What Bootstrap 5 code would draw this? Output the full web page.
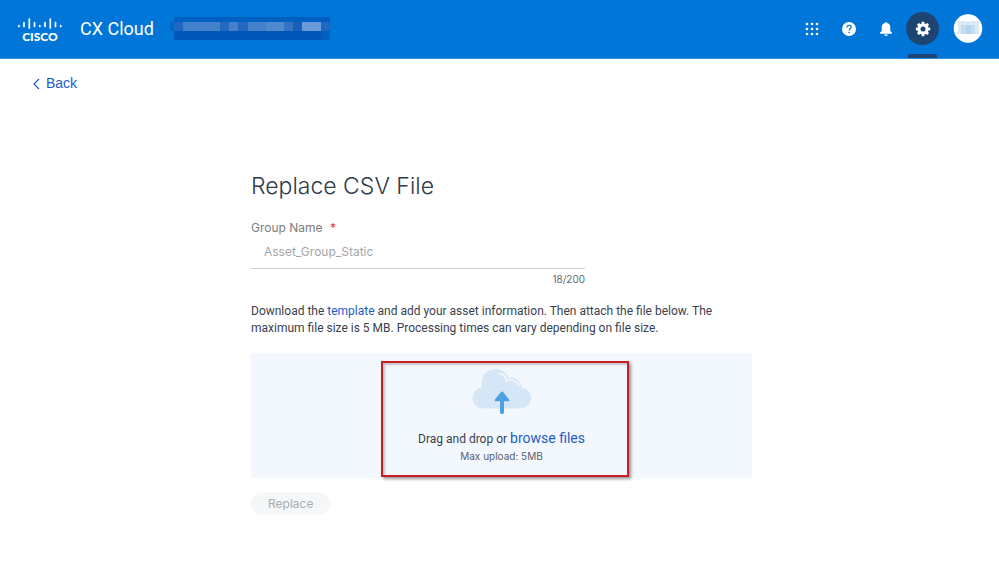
<!DOCTYPE html>
<html lang="en">
<head>
<meta charset="utf-8">
<meta name="viewport" content="width=device-width, initial-scale=1">
<title>CX Cloud</title>
<link href="https://cdn.jsdelivr.net/npm/bootstrap@5.3.0/dist/css/bootstrap.min.css" rel="stylesheet">
<style>
body{font-family:Inter,"Liberation Sans",sans-serif;font-size:12px;line-height:17px;color:#39424f;background:#fff}
a{color:#1d5cc6;text-decoration:none}
.topbar{background:#0076d8;height:59px;border-bottom:1px solid #2f8fe0;padding:0 16px 1px 16px}
.brand-name{font-family:Roboto,sans-serif;font-size:18px;line-height:24px;color:#fff}
.icon-btn{width:33px;height:33px;border-radius:50%;color:#fff}
.icon-btn.current{background:#1e4471;position:relative}
.icon-btn.current::after{content:"";position:absolute;left:2px;right:2px;bottom:-13px;height:4px;background:#1e4471;border-radius:2px 2px 0 0}
.back-link{font-family:"Liberation Sans",sans-serif;font-size:14px;line-height:17px}
.panel{max-width:505px;padding-left:4px}
.page-title{font-size:23px;line-height:33px;font-weight:300;color:#2f3a4a}
.name-field{max-width:334px}
.body-copy{font-family:Roboto,"Liberation Sans",sans-serif}
.intro{padding-top:2px}
.name-label{color:#7b7d80}
.name-input{font-size:12px;line-height:17px;height:33px;padding:0 13px;border:0;border-bottom:1px solid #d0d2d4;border-radius:0}
.name-input:disabled{background:transparent;color:#a4a6a9;opacity:1}
.counter{font-size:10px;line-height:12px;color:#63676d}
.dropzone{background:#f3f8fe;height:125px;padding-top:15px}
.browse{font-size:14px}
.limit{font-size:10px;line-height:16px;color:#5a616b}
.callout-frame{position:absolute;left:130px;top:8px;width:248px;height:116px;border:2px solid #cb1d22;box-shadow:2px 2px 3px #0006,inset 2px 2px 2px #0003;pointer-events:none}
.btn-replace{font-size:12px;line-height:17px;margin-top:14px;padding:3px 17px;border:0}
.btn-replace:disabled{background:#f6f7f9;color:#a9abae;opacity:1}
</style>
</head>
<body>
<header class="topbar d-flex align-items-center">
  <a href="#" class="d-flex align-items-center" aria-label="Cisco home">
    <svg width="48" height="28" viewBox="0 0 48 28">
      <g stroke="#fff" stroke-width="1.700" stroke-linecap="round">
        <path d="M3 10.500v1M8 7.500v4M13.300 4v9M18.500 7.500v4M23.800 10.500v1M29 7.500v4M34.300 4v9M39.500 7.500v4M44.700 10.500v1"/>
      </g>
      <text x="24" y="26" text-anchor="middle" fill="#fff" font-family="Lato,sans-serif" font-weight="900" font-size="12">CISCO</text>
    </svg>
  </a>
  <span class="brand-name ms-3">CX Cloud</span>
  <svg class="ms-3" width="160" height="24" viewBox="1 0 160 24" shape-rendering="crispEdges" aria-hidden="true">
    <path fill="#006acb" d="M0 5h5v9H0z"/>
    <path fill="#0060c2" d="M5 0h156v23H5z"/>
    <path fill="#0057b7" d="M5 14h147v9H5z"/>
    <path fill="#2069c2" d="M5 5h9v9H5zM152 5h9v9h-9z"/>
    <path fill="#4581cb" d="M14 5h37v9H14zM60 5h9v9h-9zM79 5h18v9H79z"/>
    <path fill="#2469c1" d="M51 5h9v9h-9zM69 5h10v9H69z"/>
    <path fill="#5089ce" d="M97 5h18v9H97z"/>
    <path fill="#3474c5" d="M115 5h9v9h-9z"/>
    <path fill="#1960bd" d="M124 5h9v9h-9z"/>
    <path fill="#689bd7" d="M133 5h19v9h-19z"/>
  </svg>
  <nav class="ms-auto d-flex align-items-center gap-1" aria-label="Tools">
    <button class="btn icon-btn p-0 border-0 d-flex align-items-center justify-content-center" aria-label="Apps">
      <svg width="14" height="14" fill="#fff"><circle cx="2" cy="2" r="1.300"/><circle cx="7" cy="2" r="1.300"/><circle cx="12" cy="2" r="1.300"/><circle cx="2" cy="7" r="1.300"/><circle cx="7" cy="7" r="1.300"/><circle cx="12" cy="7" r="1.300"/><circle cx="2" cy="12" r="1.300"/><circle cx="7" cy="12" r="1.300"/><circle cx="12" cy="12" r="1.300"/></svg>
    </button>
    <button class="btn icon-btn p-0 border-0 d-flex align-items-center justify-content-center" aria-label="Help">
      <svg width="14" height="14"><circle cx="7" cy="7" r="7" fill="#fff"/><path d="M5 5.500C5 2.600 9.200 2.700 9.200 5.200 9.200 6.700 7.100 6.800 7.100 8.500" fill="none" stroke="#0070cf" stroke-width="1.100"/><circle cx="7.100" cy="10.500" r=".8" fill="#0070cf"/></svg>
    </button>
    <button class="btn icon-btn p-0 border-0 d-flex align-items-center justify-content-center" aria-label="Notifications">
      <svg width="14" height="14" fill="#fff"><path d="M7 0a1 1 0 0 1 1 1C10.200 1.500 11.300 3 11.300 5.500V9l1.700 1.800v.9H1v-.9L2.700 9V5.500C2.700 3 3.800 1.500 6 1a1 1 0 0 1 1-1zM5.200 12.400h3.600a1.800 1.600 0 0 1-3.600 0z"/></svg>
    </button>
    <button class="btn icon-btn current p-0 border-0 d-flex align-items-center justify-content-center" aria-label="Settings">
      <svg width="16" height="16" viewBox="-8 -8 16 16"><g fill="#fff"><circle r="5.400"/><path id="tooth" d="M-1.700-5 -1.200-7.200H1.200L1.700-5V5L1.200 7.200H-1.200L-1.700 5z"/><use href="#tooth" transform="rotate(45)"/><use href="#tooth" transform="rotate(90)"/><use href="#tooth" transform="rotate(135)"/></g><circle r="2.500" fill="#1e4471"/></svg>
    </button>
    <button class="btn p-0 border-0 d-flex ms-2" aria-label="Account">
      <svg width="32" height="29"><circle cx="17" cy="14.500" r="14.300" fill="#fff"/><path fill="#dceaf5" d="M7 7h21v13H7z"/><path fill="#c4dcf0" d="M10 11h14v9H10z"/><path fill="#b4d3ed" d="M15 11h5v9h-5z"/></svg>
    </button>
  </nav>
</header>

<main class="container-fluid px-0">
  <a href="#" class="back-link d-inline-flex align-items-center mt-3 ms-4 px-2">
    <svg class="me-1" width="10" height="12"><path d="M7 1 2 6l5 5" fill="none" stroke="#1d5cc6" stroke-width="1.200"/></svg>Back
  </a>
  <form class="panel mx-auto mt-5 pt-4">
    <h1 class="page-title mt-1 mb-0">Replace CSV File</h1>
    <div class="name-field mt-3">
      <label class="name-label d-block" for="group">Group Name <span class="text-danger ms-1">*</span></label>
      <input class="name-input form-control" id="group" type="text" value="Asset_Group_Static" disabled>
      <div class="counter text-end mt-1">18/200</div>
    </div>
    <p class="intro body-copy mt-3 mb-3">Download the <a href="#">template</a> and add your asset information. Then attach the file below. The maximum file size is 5 MB. Processing times can vary depending on file size.</p>
    <div class="dropzone position-relative d-flex flex-column align-items-center">
      <svg width="60" height="46" viewBox="0 0 60 46" aria-hidden="true">
        <path fill="#d5e7f6" d="M10.500 40.500A10.500 10.500 0 0 1 9.500 19.600C9 8 14.500 1 23.500 1 30 1 34 4 36.500 9.500 43 8.800 49 13 50 20A10.300 10.300 0 0 1 49.500 40.500z"/>
        <path d="M27.500 5.500C31.500 6 34 9 34.300 13c5-2.500 11 .5 12.700 5" fill="none" stroke="#f3f8fe" stroke-width="1.600" stroke-linecap="round"/>
        <path fill="#4c9fe0" d="M28.600 24.500q1.400-1.800 2.800 0l5.700 7q.8 1.700-1 1.700H32V45q-2 2.400-4 0V33.200h-4.100q-1.800 0-1-1.700z"/>
      </svg>
      <div class="body-copy mt-3">Drag and drop or <a href="#" class="browse">browse files</a></div>
      <div class="limit">Max upload: 5MB</div>
      <div class="callout-frame"></div>
    </div>
    <button type="submit" class="btn btn-replace rounded-pill" disabled>Replace</button>
  </form>
</main>
<script src="https://cdn.jsdelivr.net/npm/bootstrap@5.3.0/dist/js/bootstrap.bundle.min.js"></script>
</body>
</html>
